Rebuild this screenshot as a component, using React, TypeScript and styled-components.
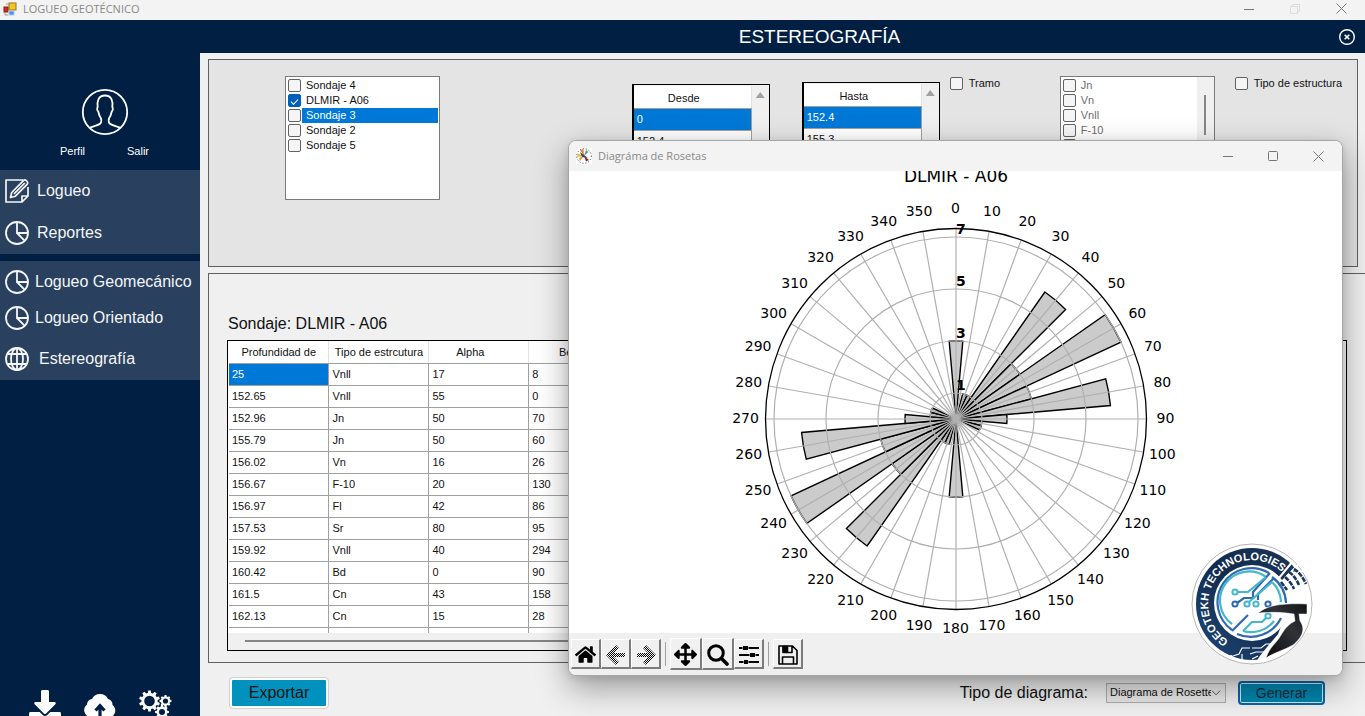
import React from "react";
import styled, { createGlobalStyle } from "styled-components";
import { FaArrowsAlt, FaDownload, FaHome } from "react-icons/fa";

const navy = "#001f42";
const sans = `"Liberation Sans", Arial, sans-serif`;
const ui = `"Open Sans", "Noto Sans", sans-serif`;

const GlobalStyle = createGlobalStyle`
  * { box-sizing: border-box; }
  body { margin: 0; font: 11px/15px ${sans}; color: #111; }
  button, select, input { margin: 0; font: inherit; color: inherit; }
  svg { display: block; flex: none; }
`;

const Screen = styled.div`
  position: relative;
  display: flex;
  flex-direction: column;
  height: 100vh;
  overflow: hidden;
  background: #f0f0f0;
`;

const TitleBar = styled.header`
  display: flex;
  align-items: center;
  gap: 6px;
  flex: none;
  height: 20px;
  padding: 0 18px 3px 3px;
  background: #f3f3f3;
  color: #888;
  font: 11px/16px ${ui};
`;

const WindowButtons = styled.div<{ $gap: number }>`
  display: flex;
  align-items: center;
  gap: ${(p) => p.$gap}px;
  margin-left: auto;
`;

const PlainButton = styled.button`
  display: grid;
  place-items: center;
  padding: 0;
  border: 0;
  background: none;
`;

const Body = styled.div`
  display: flex;
  flex: 1;
  min-height: 0;
`;

const Sidebar = styled.aside`
  display: flex;
  flex-direction: column;
  flex: none;
  width: 200px;
  background: ${navy};
  color: #fff;
`;

const Profile = styled.div`
  display: flex;
  flex-direction: column;
  align-items: center;
  gap: 8px;
  height: 150px;
  padding: 68px 0 0 9px;
`;

const ProfileLinks = styled.nav`
  display: flex;
  gap: 42px;
  a { color: #fff; text-decoration: none; }
`;

const MenuGroup = styled.nav<{ $pad: number }>`
  display: flex;
  flex-direction: column;
  margin-bottom: 7px;
  padding: ${(p) => p.$pad}px 0;
  background: #29405e;
`;

const MenuButton = styled.button<{ $gap: number; $tall?: boolean; $apart?: boolean }>`
  display: flex;
  align-items: center;
  gap: ${(p) => p.$gap}px;
  height: ${(p) => (p.$tall ? 42 : 36)}px;
  margin-top: ${(p) => (p.$apart ? 5 : 0)}px;
  padding: 0 0 0 5px;
  border: 0;
  background: none;
  color: #f4f6f8;
  font: 16px/20px ${sans};
  white-space: nowrap;
`;

const SideTools = styled.div`
  display: flex;
  align-items: flex-start;
  gap: 23px;
  height: 26px;
  margin-top: auto;
  padding-left: 29px;
  overflow: hidden;
`;

const Main = styled.main`
  display: flex;
  flex-direction: column;
  flex: 1;
  min-width: 0;
`;

const PageHeader = styled.div`
  display: flex;
  align-items: center;
  height: 33px;
  padding: 0 9px 0 101px;
  background: ${navy};
  color: #fff;
`;

const PageTitle = styled.h1`
  flex: 1;
  margin: 0;
  font: 19px/24px ${sans};
  text-align: center;
`;

const FilterPanel = styled.section`
  display: flex;
  align-items: flex-start;
  flex: none;
  height: 208px;
  margin: 6px 7px 6px 8px;
  padding: 16px 15px 0 76px;
  border: 1px solid #606060;
  background: #e4e4e4;
`;

const CheckList = styled.div<{ $disabled?: boolean }>`
  display: flex;
  flex: none;
  width: 155px;
  height: 124px;
  border: 1px solid #7a7a7a;
  background: #fff;
  overflow: hidden;
  color: ${(p) => (p.$disabled ? "#6d6d6d" : "#111")};
`;

const CheckItems = styled.div`
  flex: 1;
  padding: 1px 1px 0 2px;
`;

const CheckRow = styled.label`
  display: flex;
  align-items: center;
  gap: 1px;
  height: 15px;
`;

const CheckText = styled.span<{ $selected?: boolean }>`
  flex: 1;
  padding-left: 4px;
  line-height: 15px;
  background: ${(p) => (p.$selected ? "#0078d7" : "transparent")};
  color: ${(p) => (p.$selected ? "#fff" : "inherit")};
`;

const Check = styled.input.attrs({ type: "checkbox" })`
  appearance: none;
  display: grid;
  place-items: center;
  flex: none;
  width: 13px;
  height: 13px;
  border: 1px solid #626262;
  border-radius: 2px;
  background: #f5f5f5;
  &:checked {
    border-color: #005fb8;
    background: #005fb8;
  }
  &:checked::after {
    content: "";
    width: 6px;
    height: 3px;
    border: solid #fff;
    border-width: 0 0 1px 1px;
    transform: rotate(-45deg);
  }
`;

const ListScroll = styled.div`
  display: flex;
  justify-content: center;
  width: 17px;
  padding-top: 18px;
  background: #f0f0f0;
`;

const ListThumb = styled.div`
  width: 2px;
  height: 40px;
  background: #858585;
`;

const Filters = styled.div`
  display: flex;
  align-items: flex-start;
  margin-left: auto;
`;

const CheckLabel = styled.label`
  display: flex;
  align-items: center;
  gap: 6px;
  white-space: nowrap;
`;

const TramoSlot = styled.div`
  width: 120px;
  padding: 0 0 0 10px;
`;

const StructureSlot = styled.div`
  padding-left: 20px;
`;

const DepthBox = styled.div<{ $top: number }>`
  display: flex;
  align-items: flex-start;
  justify-content: space-between;
  width: 138px;
  height: 112px;
  margin: ${(p) => p.$top}px 32px 0 0;
  padding-top: 1px;
  border: 1px solid #000;
  border-left-width: 2px;
  background: #f0f0f0;
  overflow: hidden;
  & + & { margin-right: 0; }
`;

const Grid = styled.table`
  flex: none;
  border-collapse: collapse;
  table-layout: fixed;
  background: #fff;
  th, td {
    height: 22px;
    padding: 0 3px;
    border: solid #a0a0a0;
    border-width: 0 1px 1px 0;
    line-height: 15px;
    white-space: nowrap;
    overflow: hidden;
  }
  th {
    padding-right: 20px;
    border-right-color: #e2e2e2;
    font-weight: 400;
    text-align: center;
  }
`;

const DepthGrid = styled(Grid)`
  width: 118px;
  th { padding-top: 4px; }
`;

const Cell = styled.td<{ $selected?: boolean }>`
  background: ${(p) => (p.$selected ? "#0078d7" : "#fff")};
  color: ${(p) => (p.$selected ? "#fff" : "#111")};
`;

const UpArrow = styled.div`
  width: 9px;
  height: 6px;
  margin: 6px 4px;
  background: #a0a0a0;
  clip-path: polygon(50% 0, 100% 100%, 0 100%);
`;

const DataPanel = styled.section`
  display: flex;
  flex-direction: column;
  flex: 1;
  min-height: 0;
  margin-left: 8px;
  padding: 40px 18px 11px 18px;
  border: solid #606060;
  border-width: 1px 0 1px 1px;
`;

const PanelTitle = styled.h2`
  margin: 0 0 6px 1px;
  font: 16px/20px ${sans};
`;

const DataFrame = styled.div`
  display: flex;
  flex-direction: column;
  flex: 1;
  min-height: 0;
  border: 1px solid #000;
  background: #f0f0f0;
`;

const DataRows = styled.div`
  flex: 1;
  min-height: 0;
  padding-left: 1px;
  background: #fff;
  overflow: hidden;
`;

const DataGrid = styled(Grid)`
  width: 1000px;
  th { padding-top: 2px; }
  th:nth-child(-n + 2) { padding-right: 3px; }
`;

const DataScroll = styled.div`
  height: 17px;
  padding: 7px 60px 0 17px;
`;

const ScrollThumb = styled.div`
  height: 2px;
  background: #858585;
`;

const Footer = styled.footer`
  display: flex;
  align-items: center;
  flex: none;
  height: 53px;
  padding: 6px 40px 0 30px;
`;

const Export = styled.button`
  width: 98px;
  height: 30px;
  border: 2px solid #fff;
  border-radius: 3px;
  outline: 1px solid #d0d0d0;
  background: #0091bf;
  font: 16px/20px ${sans};
`;

const DiagramField = styled.label`
  display: flex;
  align-items: center;
  gap: 18px;
  margin-left: auto;
  font: 16px/20px ${sans};
`;

const SelectWrap = styled.span`
  display: grid;
  grid-template-columns: 1fr 14px;
  align-items: center;
  width: 120px;
  height: 20px;
  border: 1px solid #adadad;
  background: #e8e8e8;
  svg { grid-area: 1 / 2; pointer-events: none; }
`;

const Select = styled.select`
  grid-area: 1 / 1 / 2 / 3;
  appearance: none;
  width: 118px;
  height: 18px;
  padding: 0 14px 0 3px;
  border: 0;
  background: none;
  font: 11px/15px ${sans};
`;

const Generate = styled.button`
  width: 87px;
  height: 24px;
  margin-left: 12px;
  padding: 0;
  border: 2px solid #0a64ad;
  border-radius: 4px;
  box-shadow: inset 0 0 0 1px #d5ecf5;
  background: #0085ad;
  color: #062a3a;
  font: 14px/18px ${sans};
`;

const Popup = styled.section`
  position: absolute;
  top: 140px;
  right: 22px;
  width: 775px;
  border: 1px solid #a6a6a6;
  border-radius: 8px;
  background: #fff;
  box-shadow: 0 12px 32px rgba(0, 0, 0, 0.36), 0 2px 8px rgba(0, 0, 0, 0.1);
  overflow: hidden;
`;

const PopupBar = styled.header`
  display: flex;
  align-items: center;
  gap: 6px;
  height: 30px;
  padding: 0 18px 0 7px;
  background: #f3f3f3;
  color: #888;
  font: 11px/16px ${ui};
`;

const Chart = styled.svg`
  width: 100%;
  height: 462px;
  font: 14px "DejaVu Sans", sans-serif;
`;

const Toolbar = styled.div`
  display: flex;
  align-items: center;
  height: 42px;
  padding-left: 2px;
  background: #f0f0f0;
`;

const Tool = styled.button<{ $large?: boolean }>`
  display: grid;
  place-items: center;
  width: ${(p) => (p.$large ? 32 : 30)}px;
  height: ${(p) => (p.$large ? 32 : 30)}px;
  padding: 2px 0 0;
  border: solid;
  border-width: 1px 2px 2px 1px;
  border-color: #fff #7c7c7c #7c7c7c #fff;
  background: #f0f0f0;
  color: #000;
`;

const ToolRule = styled.span`
  width: 1px;
  height: 24px;
  margin: 0 4px;
  background: #a0a0a0;
`;

const LogoBadge = styled.div`
  position: absolute;
  right: 29px;
  bottom: 10px;
`;

const AppIcon = () => (
  <svg width="14" height="14" viewBox="0 0 14 14">
    <rect x="6" y="1" width="7" height="7" fill="#f3c623" stroke="#98771c" />
    <rect x="1" y="5" width="4" height="5" fill="#d92c20" stroke="#8c1a12" />
    <path d="M3 2h3M2 11v2h3" stroke="#999" fill="none" />
    <rect x="6" y="9" width="5" height="4" fill="#4f8fe8" stroke="#a9c9f2" />
  </svg>
);

const Minimize = () => (
  <svg width="10" height="10" viewBox="0 0 10 10"><path d="M0 5.5h10" stroke="#777" /></svg>
);
const Maximize = () => (
  <svg width="10" height="10" viewBox="0 0 10 10"><rect x=".5" y=".5" width="9" height="9" rx="1" fill="none" stroke="#777" /></svg>
);
const Restore = () => (
  <svg width="10" height="10" viewBox="0 0 10 10"><path d="M.5 2.500h7v7h-7zM2.500 2V.5h7v7H8" fill="none" stroke="#dcdcdc" /></svg>
);
const Close = () => (
  <svg width="11" height="11" viewBox="0 0 11 11"><path d="M.5.5l10 10M10.500.5l-10 10" stroke="#777" /></svg>
);

const CloseRound = () => (
  <svg width="18" height="18" viewBox="0 0 18 18" fill="none" stroke="#fff">
    <circle cx="9" cy="9" r="7.300" strokeWidth="1.400" />
    <path d="M6.700 6.700l4.600 4.600M11.300 6.700l-4.600 4.600" strokeWidth="1.600" />
  </svg>
);

const Avatar = () => (
  <svg width="48" height="48" viewBox="0 0 48 48" fill="none" stroke="#fff" strokeWidth="1.800" strokeLinejoin="round">
    <circle cx="24" cy="24" r="22.200" />
    <path d="M8.500 40c2-1 9-2.800 10.800-4.500 1.500-1.500 1-4.500.5-5.500-1.800-2.500-2-4-2.500-6.500-1.500-1-1.300-3.500-.6-4.300-.8-6 .6-11.700 7.300-11.700s8.100 5.700 7.300 11.700c.7.800.9 3.300-.6 4.300-.5 2.500-.7 4-2.500 6.500-.5 1-1 4 .5 5.500C30.500 37.200 37.500 39 39.500 40" />
  </svg>
);

const EditIcon = () => (
  <svg width="24" height="24" viewBox="0 0 24 24" fill="none" stroke="#f4f6f8" strokeWidth="1.700" strokeLinejoin="round">
    <path d="M18 1H1v22H17l6-6V8M17 23v-6h6" />
    <path d="M5.500 18.500l1.200-5L18.700 1.300c1.600-1.200 5 1.800 3.600 3.800L10.200 17.300zM9 14.800L19.800 4" />
  </svg>
);

const PieIcon = () => (
  <svg width="24" height="24" viewBox="0 0 24 24" fill="none" stroke="#f4f6f8" strokeWidth="1.800">
    <circle cx="12" cy="12" r="11" />
    <path d="M12 1v11h11M12 12l7.800 7.800" />
  </svg>
);

const GlobeIcon = () => (
  <svg width="24" height="24" viewBox="0 0 24 24" fill="none" stroke="#f4f6f8" strokeWidth="1.800">
    <circle cx="12" cy="12" r="11" />
    <ellipse cx="12" cy="12" rx="6" ry="11" />
    <path d="M12 1v22M2.500 7h19M2.500 17h19" />
  </svg>
);

const CloudIcon = () => (
  <svg width="32" height="26" viewBox="0 0 32 26">
    <path d="M6 27A7 7 0 0 1 3 14.500A5.500 5.500 0 0 1 8 9A9 9 0 0 1 24 9A6 6 0 0 1 28.500 15A7 7 0 0 1 27 27z" fill="#fff" />
    <path d="M16 27V15.500m-4.500 5l4.500-4.800 4.500 4.800" fill="none" stroke={navy} strokeWidth="3.200" />
  </svg>
);

function gear(cx: number, cy: number, r: number, teeth: number) {
  const pts: string[] = [];
  for (let i = 0; i < teeth; i++) {
    [[-0.32, 0.78], [-0.2, 1], [0.2, 1], [0.32, 0.78]].forEach(([o, k]) => {
      const a = ((i + o) / teeth) * Math.PI * 2;
      pts.push(`${(cx + Math.sin(a) * r * k).toFixed(2)},${(cy - Math.cos(a) * r * k).toFixed(2)}`);
    });
  }
  return pts.join(" ");
}

const GearsIcon = () => (
  <svg width="33" height="32" viewBox="0 0 33 32">
    {[[10.5, 11, 10.5, 10, 5.3], [26.500, 11, 6, 8, 2.600], [23, 22, 7, 8, 3]].map(([x, y, r, n, hole]) => (
      <g key={`${x}-${y}`}>
        <polygon points={gear(x, y, r, n)} fill="#fff" />
        <circle cx={x} cy={y} r={hole} fill={navy} />
      </g>
    ))}
  </svg>
);

const RoseIcon = () => (
  <svg width="16" height="16" viewBox="0 0 16 16">
    <rect width="16" height="16" fill="#fff" />
    <circle cx="8" cy="8" r="7.300" fill="none" stroke="#23435c" strokeDasharray="1 2" />
    <path d="M8 8L4 2l3.500-1z" fill="#f47b2a" /><path d="M8 8L1.500 5.500l-.3 3.500z" fill="#e9bf3c" />
    <path d="M8 8l-4 5-1-3z" fill="#d8a13a" /><path d="M8 8l2-6 2.500 2z" fill="#5aa08c" />
    <path d="M8 8l5 4-3 1.500z" fill="#8b2430" /><path d="M4 4l8 6-6-1z" fill="#3b4568" />
  </svg>
);

const ArrowIcon = ({ back }: { back?: boolean }) => (
  <svg width="20" height="20" viewBox="0 0 20 20">
    <defs>
      <pattern id={back ? "dotsBack" : "dotsNext"} width="2" height="2" patternUnits="userSpaceOnUse">
        <path d="M0 0h1v1H0zM1 1h1v1H1z" fill="#000" />
      </pattern>
    </defs>
    <path
      d={back ? "M0 10L10 0l3 3-5 5h11v4H8l5 5-3 3z" : "M20 10L10 0 7 3l5 5H1v4h11l-5 5 3 3z"}
      fill={`url(#${back ? "dotsBack" : "dotsNext"})`}
    />
  </svg>
);

const ZoomIcon = () => (
  <svg width="22" height="22" viewBox="0 0 22 22" fill="none" stroke="#000">
    <circle cx="9" cy="9" r="7.300" strokeWidth="3" />
    <path d="M14.500 14.500l5.500 5.500" strokeWidth="3.600" strokeLinecap="round" />
  </svg>
);

const SlidersIcon = () => (
  <svg width="20" height="20" viewBox="0 0 20 20">
    <path d="M0 3h20M0 10h20M0 17h20" stroke="#000" strokeWidth="2" />
    <path d="M4 1h5v4H4zM11 8h5v4h-5zM5 15h4v4H5z" stroke="#f0f0f0" />
    <path d="M4 1h5v4H4zM11 8h5v4h-5zM5 15h4v4H5z" />
  </svg>
);

const SaveIcon = () => (
  <svg width="20" height="20" viewBox="0 0 20 20" fill="none" stroke="#000" strokeWidth="1.600">
    <path d="M1 1h13.500L19 5.500V19H1zM4.500 19v-7h11v7M5 1v6.500h9V1" strokeLinejoin="round" />
    <path d="M5.500 1.500h4v5h-4z" fill="#000" />
  </svg>
);

const SelectChevron = () => (
  <svg width="10" height="6" viewBox="0 0 10 6"><path d="M1 .8l4 4 4-4" fill="none" stroke="#555" /></svg>
);

// Number of measurements per ten-degree sector, repeated at the opposite bearing.
const sectors: [number, number][] = [
  [0, 3], [20, 1], [30, 1], [40, 6], [50, 3], [60, 7], [70, 3], [80, 6], [90, 2], [100, 1], [110, 1],
];
const unit = 26;
const polar = (deg: number, r: number) => {
  const a = (deg * Math.PI) / 180;
  return `${(Math.sin(a) * r).toFixed(2)} ${(-Math.cos(a) * r).toFixed(2)}`;
};
const bearings = Array.from({ length: 36 }, (_, i) => i * 10);

const RoseChart = () => (
  <Chart viewBox="-387 -248 773 462" role="img" aria-label="Diagrama de rosetas DLMIR - A06">
    <text x="0" y="-237" fontSize="17" textAnchor="middle">DLMIR - A06</text>
    <g fill="#cbcbcb" stroke="#000" strokeWidth="1.400">
      {[0, 180].flatMap((turn) =>
        sectors.map(([deg, n]) => {
          const r = n * unit - (n % 2 ? 0 : 1);
          return (
            <path
              key={`${turn}-${deg}`}
              d={`M0 0L${polar(deg + turn - 5, r)}A${r} ${r} 0 0 1 ${polar(deg + turn + 5, r)}Z`}
            />
          );
        })
      )}
    </g>
    <g fill="none" stroke="#b0b0b0" strokeWidth="1.200">
      {[1, 3, 5, 7].map((n) => <circle key={n} r={n * unit} />)}
      {bearings.map((deg) => <path key={deg} d={`M0 0L${polar(deg, 190)}`} />)}
    </g>
    <circle r="190.500" fill="none" stroke="#000" strokeWidth="1.300" />
    <g fontWeight="700">
      {[1, 3, 5, 7].map((n) => <text key={n} x="0" y={-n * unit - 3}>{n}</text>)}
    </g>
    <g textAnchor="middle">
      {bearings.map((deg) => {
        const [x, y] = polar(deg, 210).split(" ").map(Number);
        return <text key={deg} x={x - 0.5} y={y + 4}>{deg}</text>;
      })}
    </g>
  </Chart>
);

const Logo = () => (
  <svg width="122" height="122" viewBox="-61 -61 122 122" role="img" aria-label="Geotekh Technologies">
    <defs>
      <linearGradient id="ring" x1="0" x2="1" y1="1" y2="0">
        <stop offset="0" stopColor="#1f4878" /><stop offset=".5" stopColor="#122c50" /><stop offset="1" stopColor="#1c3658" />
      </linearGradient>
      <linearGradient id="steel" x1="0" x2="1" y1="1" y2="0">
        <stop offset="0" stopColor="#050608" /><stop offset=".6" stopColor="#303238" /><stop offset="1" stopColor="#121316" />
      </linearGradient>
      <clipPath id="disc"><circle r="59" /></clipPath>
      <path id="ringText" d="M-23.500 36.800A43.700 43.700 0 1 1 33 -28.600" />
    </defs>
    <circle r="60" fill="#fff" stroke="#b5b5b5" />
    <circle r="56" fill="url(#ring)" />
    <path clipPath="url(#disc)" d="M62 -30L46 -33L38 -32L28 -22L38 0L26 30C18 40 10 48 4 58L62 62z" fill="#fff" />
    <circle cy="-1" r="38" fill="#fff" />
    <g fill="none" stroke="#fff" strokeWidth="2">
      <path d="M27 -26L41 -43M33 -26L47 -40M38 -25L52 -34" />
    </g>
    <g fill="none" stroke="#1c3658" strokeWidth="2.600" strokeDasharray="5 1">
      <path d="M29 -22l6 8M33 -27q6 5 9 12M37 -32q6 4 10 13M42 -35q7 4 12 15" />
    </g>
    <g fill="none" strokeWidth="2.200">
      <path d="M17 -31A34 34 0 0 0 -20 26M-15 30A34 34 0 0 0 29 14M34 -1A34 34 0 0 0 20 -27" stroke="#2f69b0" />
      <path d="M14 -27A29 29 0 0 0 -20 20M-9 27A29 29 0 0 0 22 17M29 -2A29 29 0 0 0 20 -22" stroke="#45b6cb" />
      <path d="M18 -31L1 -12V-6H-8L-15 -1" stroke="#2f69b0" />
      <path d="M14 -27L-4 -12H-14" stroke="#45b6cb" />
      <path d="M-20 27L-4 11M22 -26L6 -10V-4" stroke="#2f69b0" />
      <path d="M-9 27L0 18H10L15 13M20 -22L-3 -2" stroke="#45b6cb" />
    </g>
    <g fill="#fff" strokeWidth="2">
      <circle cx="-17" cy="-12" r="2.600" stroke="#45b6cb" />
      <circle cx="-17" cy="0" r="2.600" stroke="#2f69b0" />
      <circle cx="-5" cy="0" r="2.600" stroke="#45b6cb" />
      <circle cx="4" cy="0" r="2.600" stroke="#45b6cb" />
      <circle cx="16" cy="0" r="2.600" stroke="#2f69b0" />
      <circle cx="16" cy="12" r="2.600" stroke="#45b6cb" />
    </g>
    <g fill="none" stroke="#fff" strokeWidth="1.200">
      <path d="M-19 52l6-2 3-6h8M-10 56v-6M0 44h9l5-4h8M-2 50l6-2h8M0 55l6-3" />
      <circle cx="-21" cy="53" r="1.300" />
    </g>
    <path d="M6 9C16 1 30 -1 55 0V10H47L48 17C54 25 50 34 41 41C33 46 23 48 14 54C18 42 24 40 29 31C34 23 37 20 43 17L42 10C30 8 18 8 6 9z" fill="url(#steel)" stroke="#fff" strokeWidth=".5" />
    <text fontFamily="Liberation Sans, Arial, sans-serif" fontSize="11" fontWeight="700" fill="#fff">
      <textPath href="#ringText">GEOTEKH TECHNOLOGIES</textPath>
    </text>
  </svg>
);

const boreholes = [
  { name: "Sondaje 4" },
  { name: "DLMIR - A06", checked: true },
  { name: "Sondaje 3", selected: true },
  { name: "Sondaje 2" },
  { name: "Sondaje 5" },
];
const structures = ["Jn", "Vn", "Vnll", "F-10", "Fn-10", "Fl", "Sr"];

const readings = [
  ["25", "Vnll", "17", "8"],
  ["152.65", "Vnll", "55", "0"],
  ["152.96", "Jn", "50", "70"],
  ["155.79", "Jn", "50", "60"],
  ["156.02", "Vn", "16", "26"],
  ["156.67", "F-10", "20", "130"],
  ["156.97", "Fl", "42", "86"],
  ["157.53", "Sr", "80", "95"],
  ["159.92", "Vnll", "40", "294"],
  ["160.42", "Bd", "0", "90"],
  ["161.5", "Cn", "43", "158"],
  ["162.13", "Cn", "15", "28"],
  ["", "", "", ""],
];

const DepthTable = ({ title, rows, top }: { title: string; rows: string[]; top: number }) => (
  <DepthBox $top={top}>
    <DepthGrid>
      <thead><tr><th>{title}</th></tr></thead>
      <tbody>
        {rows.map((v, i) => <tr key={v}><Cell $selected={i === 0}>{v}</Cell></tr>)}
      </tbody>
    </DepthGrid>
    <UpArrow />
  </DepthBox>
);

export default function App() {
  return (
    <Screen>
      <GlobalStyle />
      <TitleBar>
        <AppIcon />
        <span>LOGUEO GEOTÉCNICO</span>
        <WindowButtons $gap={36}>
          <PlainButton aria-label="Minimizar"><Minimize /></PlainButton>
          <PlainButton aria-label="Restaurar"><Restore /></PlainButton>
          <PlainButton aria-label="Cerrar"><Close /></PlainButton>
        </WindowButtons>
      </TitleBar>

      <Body>
        <Sidebar>
          <Profile>
            <Avatar />
            <ProfileLinks><a href="#perfil">Perfil</a><a href="#salir">Salir</a></ProfileLinks>
          </Profile>
          <MenuGroup $pad={0}>
            <MenuButton $gap={8} $tall><EditIcon />Logueo</MenuButton>
            <MenuButton $gap={8} $tall><PieIcon />Reportes</MenuButton>
          </MenuGroup>
          <MenuGroup $pad={3}>
            <MenuButton $gap={6}><PieIcon />Logueo Geomecánico</MenuButton>
            <MenuButton $gap={6}><PieIcon />Logueo Orientado</MenuButton>
            <MenuButton $gap={10} $apart><GlobeIcon />Estereografía</MenuButton>
          </MenuGroup>
          <SideTools>
            <PlainButton aria-label="Descargar"><FaDownload size={32} color="#fff" /></PlainButton>
            <PlainButton aria-label="Subir"><CloudIcon /></PlainButton>
            <PlainButton aria-label="Configurar"><GearsIcon /></PlainButton>
          </SideTools>
        </Sidebar>

        <Main>
          <PageHeader>
            <PageTitle>ESTEREOGRAFÍA</PageTitle>
            <PlainButton aria-label="Cerrar estereografía"><CloseRound /></PlainButton>
          </PageHeader>

          <FilterPanel>
            <CheckList>
              <CheckItems>
                {boreholes.map((b) => (
                  <CheckRow key={b.name}>
                    <Check defaultChecked={b.checked} />
                    <CheckText $selected={b.selected}>{b.name}</CheckText>
                  </CheckRow>
                ))}
              </CheckItems>
            </CheckList>
            <Filters>
              <DepthTable title="Desde" rows={["0", "152.4", "155.3", "158.1"]} top={8} />
              <DepthTable title="Hasta" rows={["152.4", "155.3", "158.1", "161.2"]} top={6} />
              <TramoSlot><CheckLabel><Check />Tramo</CheckLabel></TramoSlot>
              <CheckList $disabled>
                <CheckItems>
                  {structures.map((s) => (
                    <CheckRow key={s}><Check disabled /><CheckText>{s}</CheckText></CheckRow>
                  ))}
                </CheckItems>
                <ListScroll><ListThumb /></ListScroll>
              </CheckList>
              <StructureSlot><CheckLabel><Check />Tipo de estructura</CheckLabel></StructureSlot>
            </Filters>
          </FilterPanel>

          <DataPanel>
            <PanelTitle>Sondaje: DLMIR - A06</PanelTitle>
            <DataFrame>
              <DataRows>
                <DataGrid>
                  <thead>
                    <tr>
                      {["Profundidad de", "Tipo de estrcutura", "Alpha", "Beta", "", "", "", "", "", ""].map((h, i) => (
                        <th key={i}>{h}</th>
                      ))}
                    </tr>
                  </thead>
                  <tbody>
                    {readings.map((r, i) => (
                      <tr key={i}>
                        {[...r, "", "", "", "", "", ""].map((v, j) => (
                          <Cell key={j} $selected={i === 0 && j === 0}>{v}</Cell>
                        ))}
                      </tr>
                    ))}
                  </tbody>
                </DataGrid>
              </DataRows>
              <DataScroll><ScrollThumb /></DataScroll>
            </DataFrame>
          </DataPanel>

          <Footer>
            <Export>Exportar</Export>
            <DiagramField>
              Tipo de diagrama:
              <SelectWrap>
                <Select defaultValue="rosette"><option value="rosette">Diagrama de Rosettes</option></Select>
                <SelectChevron />
              </SelectWrap>
            </DiagramField>
            <Generate>Generar</Generate>
          </Footer>
        </Main>
      </Body>

      <Popup>
        <PopupBar>
          <RoseIcon />
          <span>Diagráma de Rosetas</span>
          <WindowButtons $gap={35}>
            <PlainButton aria-label="Minimizar diagrama"><Minimize /></PlainButton>
            <PlainButton aria-label="Maximizar diagrama"><Maximize /></PlainButton>
            <PlainButton aria-label="Cerrar diagrama"><Close /></PlainButton>
          </WindowButtons>
        </PopupBar>
        <RoseChart />
        <Toolbar>
          <Tool aria-label="Inicio"><FaHome size={21} /></Tool>
          <Tool aria-label="Atrás"><ArrowIcon back /></Tool>
          <Tool aria-label="Adelante"><ArrowIcon /></Tool>
          <ToolRule />
          <Tool $large aria-label="Mover"><FaArrowsAlt size={23} /></Tool>
          <Tool $large aria-label="Ampliar"><ZoomIcon /></Tool>
          <Tool aria-label="Ajustes"><SlidersIcon /></Tool>
          <ToolRule />
          <Tool aria-label="Guardar"><SaveIcon /></Tool>
        </Toolbar>
        <LogoBadge><Logo /></LogoBadge>
      </Popup>
    </Screen>
  );
}
